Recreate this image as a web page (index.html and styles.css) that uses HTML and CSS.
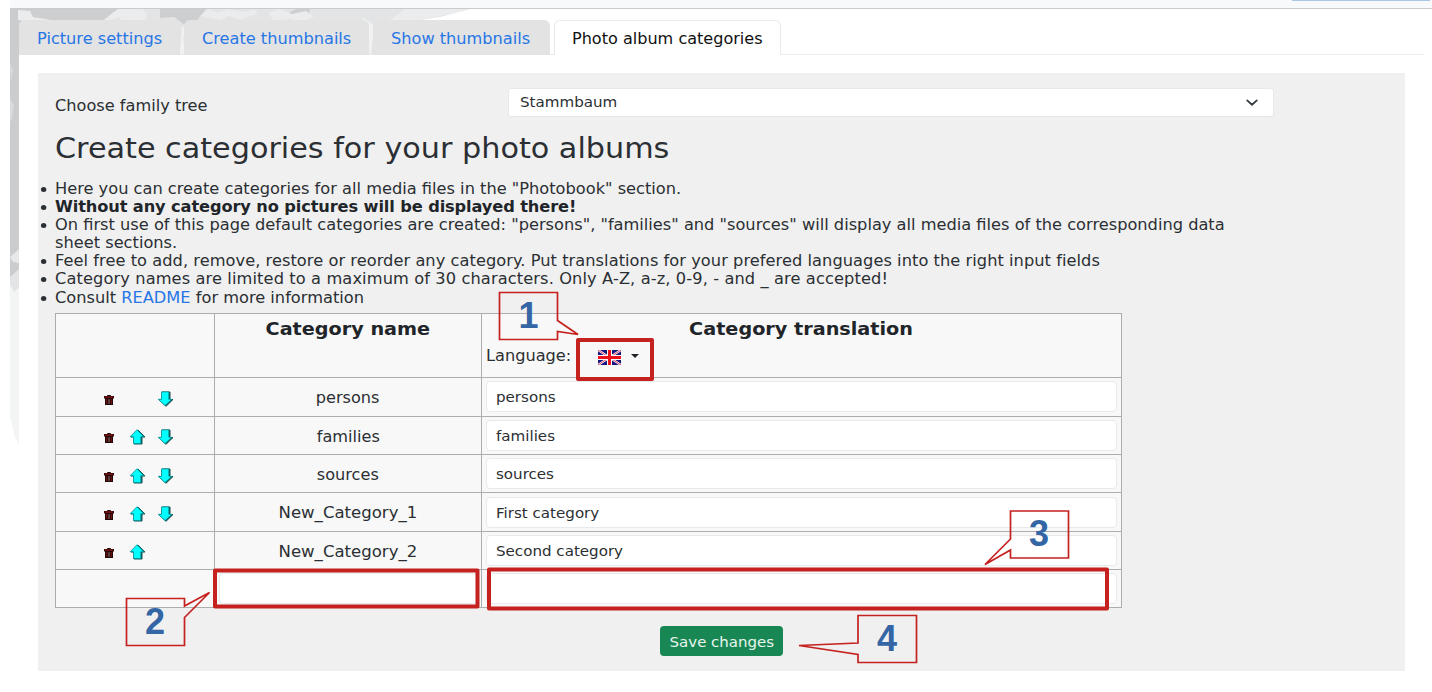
FILE: index.html
```html
<!DOCTYPE html>
<html lang="en">
<head>
<meta charset="utf-8">
<title>Photo album categories</title>
<link rel="stylesheet" href="styles.css">
</head>
<body>
<svg class="defs" width="0" height="0">
  <symbol id="trash" viewBox="0 0 10 10"><path d="M3.200 0h3.600v1H10v2.600H9V10H1V3.600H0V1h3.200z" fill="#230808"/><path d="M.8 1.500h8.400v1.200H.8z" fill="#8f1414"/><path d="M2.700 4v5M7.300 4v5" stroke="#7a1212"/><path d="M5 4.200v4.600" stroke="#b89090" stroke-width=".8"/></symbol>
  <symbol id="up" viewBox="0 0 17 16"><path d="M9 1l7 7h-3v7H5V8H2z" fill="#155" stroke="#155"/><path d="M8 .7l6.800 7h-3V14.500H4.500V7.700H1.200z" fill="#0ff" stroke="#0a8f95" stroke-width=".8"/></symbol>
  <symbol id="down" viewBox="0 0 17 16"><path d="M5 1h8v7.500h3L9 15.300 2 8.500h3z" fill="#155" stroke="#155"/><path d="M4.500 .9h7.300v7.400h3L8 14.600l-6.800-6.300h3.300z" fill="#0ff" stroke="#0a8f95" stroke-width=".8"/></symbol>
</svg>
<div class="topbar"><div class="topbar-button"></div></div>
<div class="page">
  <svg class="backdrop" width="460" height="436" viewBox="0 0 460 436">
    <path d="M0 0H460L430 8 390 14 365 46H9V436L0 400z" fill="#e2e4e5"/>
    <path d="M0 0H9V260L0 268z" fill="#cbcccd"/>
    <path d="M9 0H108l-12 9-6 5H9zM150 0h46l-8 10 4 12-16-5-12-9-14 1zM286 0h14l-2 8-16 3-10-3z" fill="#cdcecf"/>
    <path d="M8 1l12 1 3 6 18 3-22 2-11-2zM108 0h24l5 4-2 10h-22l-4-6-20 7zM190 7l9-7 9 4 10-4 17 3 9-3 4 5-9 2-8 4-12-4-9 4zM258 4l12-4 12 5 14-3 8 6-14 5-12-3-13 3zM395 0H460L436 6l-18 4-22 2-18 0z" fill="#eaeced"/>
    <path d="M172 17l5 5-4 8 5 16h-9l2-14zM352 8l12 8-3 30h-5l2-28z" fill="#f0f1f2"/>
    <path d="M0 55l3 6-2 12zM0 90l4 6-2 14-2 3z" fill="#d8dadb"/>
    <path d="M0 248l9-8v14l-6-1zM9 285l-6 8 6 10zM0 306l6-6 3 20-5 20-4-8z" fill="#e6e8e9"/>
    <path d="M0 275l4 8 5-5v158l-4-8-5-20z" fill="#f3f4f4"/>
  </svg>
  <nav class="tabs">
    <a class="tab t1"><span class="wide">Picture settings</span></a>
    <a class="tab t2"><span class="wide">Create thumbnails</span></a>
    <a class="tab t3"><span class="wide">Show thumbnails</span></a>
    <a class="tab t4 active"><span class="wide">Photo album categories</span></a>
  </nav>
  <main class="content">
    <section class="panel">
      <div class="tree-row">
        <label><span class="wide">Choose family tree</span></label>
        <div class="select"><span class="wide">Stammbaum</span><svg width="14" height="14" viewBox="0 0 16 16"><path d="M2.500 5l5.500 5 5.500-5" fill="none" stroke="#343a40" stroke-width="2" stroke-linecap="round" stroke-linejoin="round"/></svg></div>
      </div>
      <h2><span class="wide">Create categories for your photo albums</span></h2>
      <ul class="hints">
        <li>Here you can create categories for all media files in the "Photobook" section.</li>
        <li><b>Without any category no pictures will be displayed there!</b></li>
        <li>On first use of this page default categories are created: "persons", "families" and "sources" will display all media files of the corresponding data<br>sheet sections.</li>
        <li class="loose">Feel free to add, remove, restore or reorder any category. Put translations for your prefered languages into the right input fields</li>
        <li class="looser">Category names are limited to a maximum of 30 characters. Only A-Z, a-z, 0-9, - and _ are accepted!</li>
        <li>Consult <a>README</a> for more information</li>
      </ul>
      <table>
        <colgroup><col class="c1"><col class="c2"><col class="c3"></colgroup>
        <tr class="head"><th></th><th><span class="title">Category name</span></th><th><span class="title">Category translation</span>
          <div class="lang"><span class="wide">Language:</span>
            <svg class="flag" width="23" height="15" viewBox="0 0 23 15"><path fill="#15157d" d="M0 0h23v15H0z"/><path d="M0 0l23 15M23 0L0 15" stroke="#fff" stroke-width="2.200"/><path d="M0 0l23 15M23 0L0 15" stroke="#e0305a" stroke-width=".9"/><path d="M11.500 0v15M0 7.500h23" stroke="#fff" stroke-width="5"/><path d="M11.500 0v15M0 7.500h23" stroke="#f0101c" stroke-width="3"/></svg>
            <i class="caret"></i></div></th></tr>
        <tr><td><div class="actions"><svg class="trash"><use href="#trash"/></svg><svg class="arrow down"><use href="#down"/></svg></div></td><td><span class="name">persons</span></td><td><div class="input"><span class="wide">persons</span></div></td></tr>
        <tr><td><div class="actions"><svg class="trash"><use href="#trash"/></svg><svg class="arrow up"><use href="#up"/></svg><svg class="arrow down"><use href="#down"/></svg></div></td><td><span class="name">families</span></td><td><div class="input"><span class="wide">families</span></div></td></tr>
        <tr><td><div class="actions"><svg class="trash"><use href="#trash"/></svg><svg class="arrow up"><use href="#up"/></svg><svg class="arrow down"><use href="#down"/></svg></div></td><td><span class="name">sources</span></td><td><div class="input"><span class="wide">sources</span></div></td></tr>
        <tr><td><div class="actions"><svg class="trash"><use href="#trash"/></svg><svg class="arrow up"><use href="#up"/></svg><svg class="arrow down"><use href="#down"/></svg></div></td><td><span class="name long">New_Category_1</span></td><td><div class="input"><span class="wide">First category</span></div></td></tr>
        <tr><td><div class="actions"><svg class="trash"><use href="#trash"/></svg><svg class="arrow up"><use href="#up"/></svg></div></td><td><span class="name long">New_Category_2</span></td><td><div class="input"><span class="wide">Second category</span></div></td></tr>
        <tr class="last"><td></td><td><div class="input"></div></td><td><div class="input"></div></td></tr>
      </table>
      <button class="save"><span>Save changes</span></button>
    </section>
  </main>
</div>
<svg class="callouts" width="1432" height="692" viewBox="0 0 1432 692">
  <g class="frame">
    <rect x="578" y="340" width="74" height="39"/>
    <rect x="215" y="570.500" width="262.500" height="36"/>
    <rect x="489" y="569.500" width="618" height="39"/>
  </g>
  <g class="bubble">
    <path d="M499.500 292.500H557.500V320.500L578 334.500 557.500 331.500V339.500H499.500z"/>
    <path d="M126.500 598.500H184.500V606L209.500 592.500 184.500 617.500V645.500H126.500z"/>
    <path d="M1010.500 511H1068.500V558H1010.500V550L985 564.500 1010.500 539z"/>
    <path d="M858 615.500H916.500V662.500H858V654.500L799 645.500 858 643z"/>
  </g>
  <g class="number">
    <text x="528.500" y="328">1</text>
    <text x="155" y="634">2</text>
    <text x="1039" y="546">3</text>
    <text x="887" y="651">4</text>
  </g>
</svg>
</body>
</html>
```
FILE: styles.css
```css
* { box-sizing: border-box; }
body { margin: 0; height: 692px; overflow: hidden; background: #fff; color: #2b2f33; font: 15px/18.1px "DejaVu Sans", sans-serif; }
.defs { position: absolute; }
.wide { display: inline-block; transform: scaleX(1.078); transform-origin: left; white-space: nowrap; }
.topbar { height: 9px; margin-left: 10px; background: #f8f9fb; border-bottom: 1px solid #c9cbcd; display: flex; justify-content: flex-end; }
.topbar-button { width: 138px; height: 1px; margin-right: 2px; background: #aac6e6; }
.page { position: relative; margin-left: 10px; height: 683px; }
.backdrop { position: absolute; left: 0; top: 0; }
.tabs { position: relative; display: flex; gap: 4px; height: 46px; margin: 0 8px 0 9px; padding-top: 11px; border-bottom: 1px solid #ececec; }
.tab { height: 35px; padding: 9.500px 0 0 18px; border-radius: 6px 6px 0 0; background: #e3e3e3; color: #2776e6; white-space: nowrap; }
.tab.active { background: #fff; color: #111; border: 1px solid #e9e9e9; border-bottom: 0; padding: 8.500px 0 0 17px; }
.t1 { width: 161px; }
.t2 { width: 185px; }
.t3 { width: 177px; }
.t4 { width: 227px; }
.t4 .wide { transform: scaleX(1.071); }
.content { position: relative; margin-left: 9px; height: 637px; background: #fff; padding: 18px 27px 0 19px; }
.panel { height: 598px; background: #f0f0f0; padding: 15px 17px 0; }
.tree-row { display: flex; }
.tree-row label { width: 453px; padding-top: 9px; }
.select { width: 766px; height: 29px; background: #fff; border: 1px solid #e6e8ea; border-radius: 3px; display: flex; justify-content: space-between; align-items: center; padding: 0 14px 0 11px; font-size: 14px; }
h2 { font-size: 28px; font-weight: 400; line-height: 34px; margin: 15px 0 14px; white-space: nowrap; }
h2 .wide { transform: scaleX(1.08); }
.hints { margin: 0; padding: 0; list-style: none; white-space: nowrap; transform: scaleX(1.081); transform-origin: left; }
.hints li::before { content: ""; float: left; width: 5px; height: 5px; margin: 7px 0 0 -12.800px; border-radius: 50%; background: #2b2f33; }
.hints b { letter-spacing: -.11px; color: #212529; }
.hints a { color: #2776e6; }
.loose { letter-spacing: .045px; }
.looser { letter-spacing: .105px; }
table { margin-top: 6px; width: 1065.500px; border-collapse: collapse; table-layout: fixed; background: #f8f8f8; }
.c1 { width: 159px; }
.c2 { width: 267px; }
.c3 { width: 639.500px; }
tr { height: 38.400px; }
tr.head { height: 64.500px; }
tr.last { height: 38px; }
th, td { border: 1px solid #adadad; padding: 0 4px; text-align: center; }
th { font-size: 17px; vertical-align: top; padding-top: 6px; color: #212529; }
.title { display: inline-block; transform: scaleX(1.13); }
.lang { display: flex; align-items: center; font-size: 15px; font-weight: 400; height: 36px; color: #2b2f33; }
.flag { margin: 3px 0 0 33px; }
.caret { margin-left: 10px; border: 4px solid transparent; border-top-color: #212529; border-bottom: 0; }
.name { display: inline-block; transform: scaleX(1.075); padding-top: 3px; }
.name.long { transform: scaleX(1.103); }
.input { height: 31px; background: #fff; border: 1px solid #e8eaed; border-radius: 4px; text-align: left; padding: 6px 9px; font-size: 14px; }
.actions { display: grid; grid-template-columns: 10px 17px 17px; justify-content: start; align-items: center; padding: 4px 0 0 44px; column-gap: 10.500px; }
.trash { width: 10px; height: 10px; margin-top: 2px; }
.arrow { width: 17px; height: 16px; }
.up { grid-column: 2; margin-left: 4.500px; }
.down { grid-column: 3; margin-left: 4.500px; }
.save { display: block; margin: 18px 0 0 605px; width: 123px; height: 30px; padding: 2px 0 0; border: 0; border-radius: 4px; background: #198754; color: #e8f6ee; font: 14px "DejaVu Sans", sans-serif; }
.save span { display: inline-block; transform: scaleX(1.07); }
.callouts { position: absolute; left: 0; top: 0; }
.frame { fill: none; stroke: #c4211f; stroke-width: 4; stroke-linejoin: round; }
.bubble { fill: none; stroke: #c4211f; stroke-width: 1.700; }
.number { fill: #3465a4; font: bold 36px "Liberation Sans", sans-serif; text-anchor: middle; }
```
